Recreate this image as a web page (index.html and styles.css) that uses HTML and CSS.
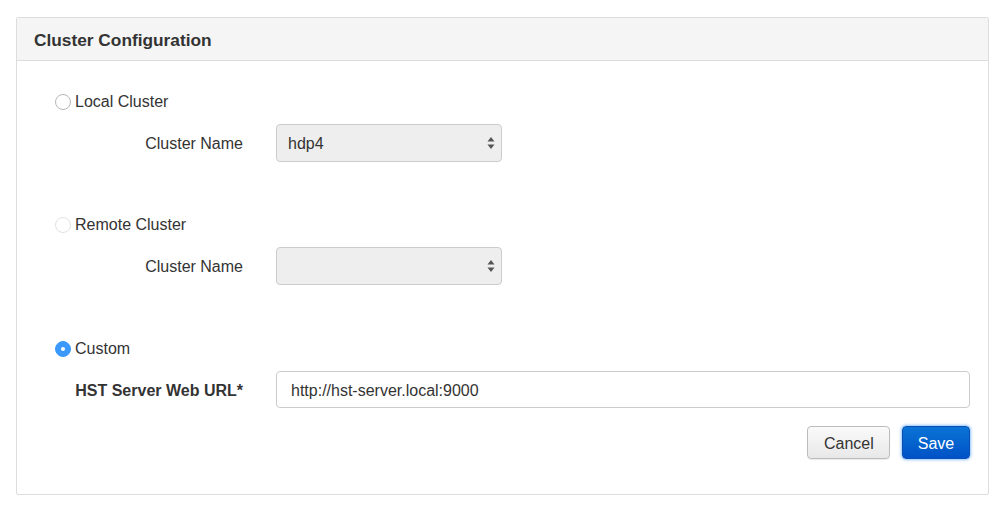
FILE: index.html
```html
<!DOCTYPE html>
<html>
<head>
<meta charset="utf-8">
<link rel="stylesheet" href="styles.css">
</head>
<body>
<div class="panel">
  <div class="panel-heading">Cluster Configuration</div>
  <div class="panel-body">
    <div class="group">
      <label class="radio"><span class="dot"></span>Local Cluster</label>
      <div class="row">
        <div class="label">Cluster Name</div>
        <div class="select"><span class="value">hdp4</span>
          <svg class="arrows" width="8" height="14" viewBox="0 0 8 14"><path d="M4 1 L7.5 5.5 L0.5 5.5 Z M4 13 L7.5 8.5 L0.5 8.5 Z" fill="#555"/></svg>
        </div>
      </div>
    </div>
    <div class="group">
      <label class="radio"><span class="dot dim"></span>Remote Cluster</label>
      <div class="row">
        <div class="label">Cluster Name</div>
        <div class="select"><span class="value"></span>
          <svg class="arrows" width="8" height="14" viewBox="0 0 8 14"><path d="M4 1 L7.5 5.5 L0.5 5.5 Z M4 13 L7.5 8.5 L0.5 8.5 Z" fill="#555"/></svg>
        </div>
      </div>
    </div>
    <div class="group last">
      <label class="radio"><span class="dot checked"></span>Custom</label>
      <div class="row">
        <div class="label bold">HST Server Web URL*</div>
        <div class="input">http://hst-server.local:9000</div>
      </div>
      <div class="actions">
        <button class="btn">Cancel</button>
        <button class="btn primary">Save</button>
      </div>
    </div>
  </div>
</div>
</body>
</html>
```
FILE: styles.css
```css
html, body {
  margin: 0;
  padding: 0;
  background: #fff;
}
body {
  font-family: "Liberation Sans", Arial, sans-serif;
  font-size: 16px;
  color: #333;
}
.panel {
  margin: 17px 0 0 16px;
  width: 971px;
  border: 1px solid #ddd;
  border-radius: 2px;
}
.panel-heading {
  height: 42px;
  line-height: 45px;
  padding-left: 17px;
  background: #f5f5f5;
  border-bottom: 1px solid #ddd;
  font-size: 17.3px;
  font-weight: bold;
  color: #333;
}
.panel-body {
  padding: 30px 18px 35px 38px;
  display: flex;
  flex-direction: column;
}
.group {
  display: flex;
  flex-direction: column;
  margin-bottom: 52px;
}
.group + .group.last {
  margin-top: 1px;
}
.group.last {
  margin-bottom: 0;
}
.radio {
  display: flex;
  align-items: center;
  height: 21px;
  padding-top: 1px;
  box-sizing: border-box;
  line-height: 20px;
}
.dot {
  width: 14px;
  height: 14px;
  border: 1px solid #b8b8b8;
  border-radius: 50%;
  background: #fff;
  margin-right: 4px;
  box-sizing: content-box;
  position: relative;
}
.dot.dim {
  border-color: #e2e2e2;
}
.dot.checked {
  background: #3b99fc;
  border-color: #3b99fc;
}
.dot.checked::after {
  content: "";
  position: absolute;
  left: 5px;
  top: 5px;
  width: 4px;
  height: 4px;
  border-radius: 50%;
  background: #fff;
}
.row {
  display: grid;
  grid-template-columns: 188px 1fr;
  column-gap: 33px;
  align-items: center;
  margin-top: 12px;
}
.label {
  text-align: right;
  padding-top: 2px;
}
.label.bold {
  font-weight: bold;
}
.select {
  box-sizing: border-box;
  width: 226px;
  height: 38px;
  border: 1px solid #ccc;
  border-radius: 4px;
  background: #eeeeee;
  display: flex;
  align-items: center;
  justify-content: space-between;
  padding: 2px 6px 0 11px;
  color: #333;
}
.arrows {
  display: block;
  margin-top: -2px;
}
.input {
  height: 35px;
  line-height: 37px;
  border: 1px solid #ccc;
  border-radius: 4px;
  background: #fff;
  padding-left: 14px;
  color: #333;
}
.actions {
  display: flex;
  justify-content: flex-end;
  gap: 12px;
  margin-top: 18px;
}
.btn {
  font-family: "Liberation Sans", Arial, sans-serif;
  font-size: 16px;
  height: 33px;
  border-radius: 4px;
  border: 1px solid #bcbcbc;
  background: linear-gradient(#fafafa, #e8e8e8);
  color: #333;
  padding: 2px 16px 0;
  box-shadow: 0 1px 1px rgba(0,0,0,0.08);
}
.btn:first-child {
  width: 83px;
}
.btn.primary {
  width: 68px;
  padding: 2px 0 0;
  color: #fff;
  border: 1px solid #0b4fb4;
  background: linear-gradient(#0a74d6, #0052c6);
  box-shadow: 0 0 3px 1px #8fc3ff;
}
```
